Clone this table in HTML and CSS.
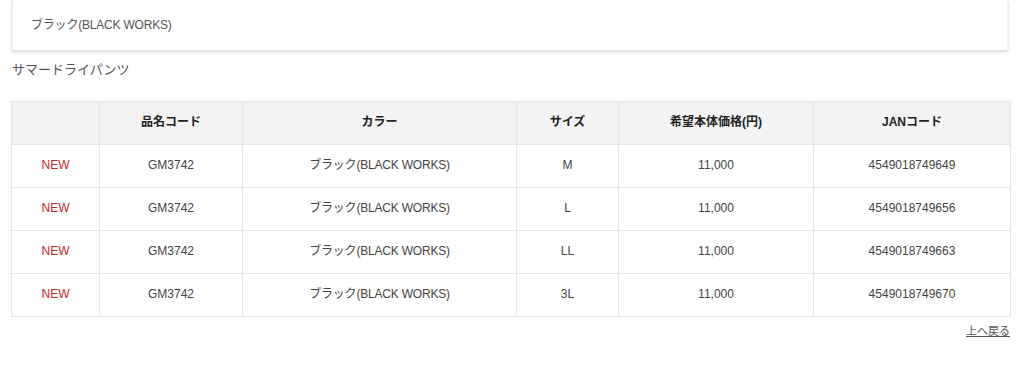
FILE: index.html
```html
<!DOCTYPE html>
<html lang="ja">
<head>
<meta charset="utf-8">
<link rel="stylesheet" href="styles.css">
</head>
<body>
<div class="page">
  <div class="card">
    <p class="card-text">ブラック(BLACK WORKS)</p>
  </div>
  <h2 class="title">サマードライパンツ</h2>
  <table class="spec">
    <colgroup>
      <col class="c1"><col class="c2"><col class="c3"><col class="c4"><col class="c5"><col class="c6">
    </colgroup>
    <thead>
      <tr><th></th><th>品名コード</th><th>カラー</th><th>サイズ</th><th>希望本体価格(円)</th><th>JANコード</th></tr>
    </thead>
    <tbody>
      <tr><td class="new">NEW</td><td>GM3742</td><td class="color">ブラック(BLACK WORKS)</td><td>M</td><td>11,000</td><td>4549018749649</td></tr>
      <tr><td class="new">NEW</td><td>GM3742</td><td class="color">ブラック(BLACK WORKS)</td><td>L</td><td>11,000</td><td>4549018749656</td></tr>
      <tr><td class="new">NEW</td><td>GM3742</td><td class="color">ブラック(BLACK WORKS)</td><td>LL</td><td>11,000</td><td>4549018749663</td></tr>
      <tr><td class="new">NEW</td><td>GM3742</td><td class="color">ブラック(BLACK WORKS)</td><td>3L</td><td>11,000</td><td>4549018749670</td></tr>
    </tbody>
  </table>
  <div class="back"><a href="#">上へ戻る</a></div>
</div>
</body>
</html>
```
FILE: styles.css
```css
* { box-sizing: border-box; }
body {
  margin: 0;
  background: #fff;
  font-family: "Liberation Sans", Arial, "Noto Sans CJK JP", sans-serif;
  color: #444;
}
.page {
  padding: 0 14px 0 11px;
}
.card {
  height: 50px;
  margin: 0 2px 0 1px;
  border-left: 1px solid #f1f1f1;
  border-right: 1px solid #f1f1f1;
  box-shadow: 0 2px 3px rgba(0, 0, 0, 0.16);
  display: flex;
  align-items: center;
  padding: 0 18px 0;
}
.card-text {
  margin: 0;
  font-size: 12px;
  line-height: 14px;
  color: #555;
  letter-spacing: -0.2px;
}
.title {
  margin: 11px 0 0 1px;
  font-size: 13px;
  font-weight: normal;
  color: #555;
  line-height: 18px;
  height: 40px;
}
.spec {
  width: 999px;
  border-collapse: collapse;
  table-layout: fixed;
  font-size: 12px;
  line-height: 14px;
}
.c1 { width: 88px; }
.c2 { width: 143px; }
.c3 { width: 274px; }
.c4 { width: 102px; }
.c5 { width: 195px; }
.c6 { width: 197px; }
.spec th, .spec td {
  border: 1px solid #e6e6e6;
  text-align: center;
  height: 43px;
  padding: 0 0 3px;
}
.spec td { padding-bottom: 2px; color: #444; }
.spec th {
  background: #f3f3f3;
  font-weight: bold;
  color: #222;
}
.spec td.color { letter-spacing: -0.2px; }
.spec td.new { color: #c8282d; }
.back {
  display: flex;
  justify-content: flex-end;
  padding-top: 7px;
}
.back a {
  font-size: 11px;
  line-height: 14px;
  color: #555;
  text-decoration: underline;
}
```
